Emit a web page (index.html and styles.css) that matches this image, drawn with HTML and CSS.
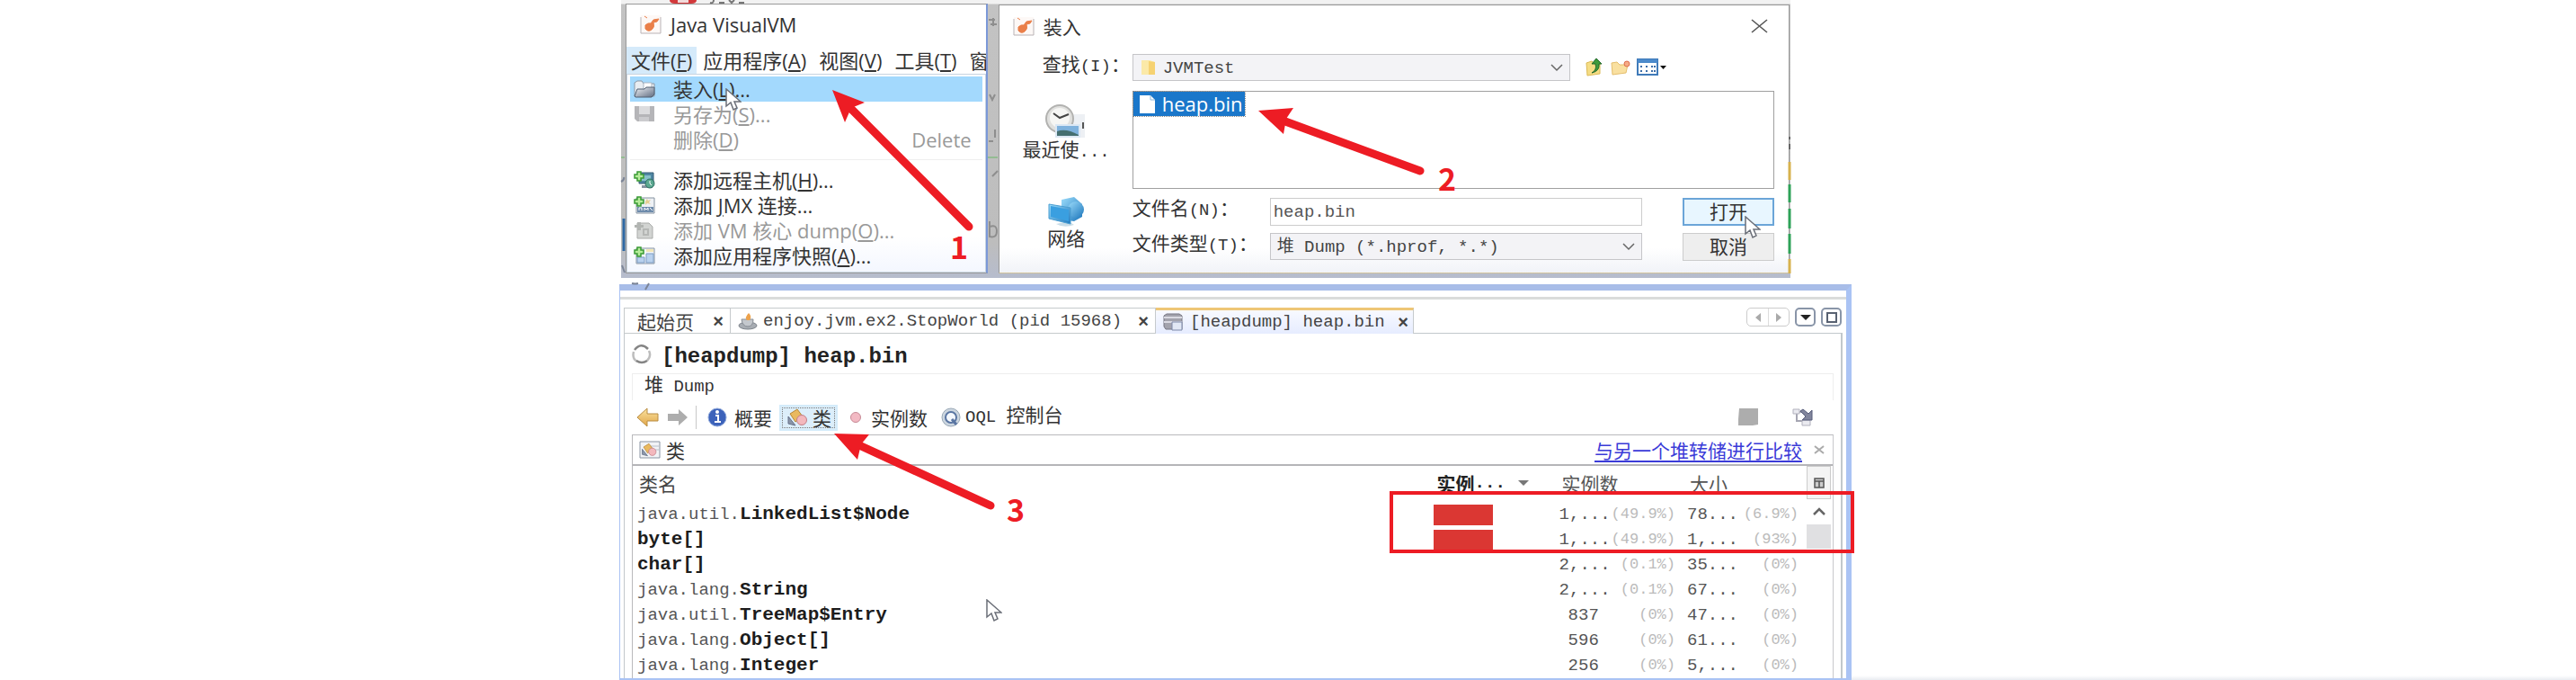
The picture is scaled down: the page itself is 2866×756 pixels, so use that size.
FILE: index.html
```html
<!DOCTYPE html>
<html lang="zh-CN">
<head>
<meta charset="utf-8">
<title>Java VisualVM</title>
<link rel="stylesheet" href="styles.css">
</head>
<body>
<svg class="defs" width="0" height="0" aria-hidden="true">
  <defs>
    <linearGradient id="gold" x1="0" y1="0" x2="0" y2="1"><stop offset="0" stop-color="#fbe3a0"/><stop offset="1" stop-color="#e0a548"/></linearGradient>
    <linearGradient id="steel" x1="0" y1="0" x2="1" y2="1"><stop offset="0" stop-color="#f2f4f8"/><stop offset="1" stop-color="#5f6b80"/></linearGradient>
    <linearGradient id="sea" x1="0" y1="0" x2="1" y2="1"><stop offset="0" stop-color="#9bdcfb"/><stop offset="1" stop-color="#1f78bd"/></linearGradient>
    <symbol id="vm" viewBox="0 0 24 22"><rect x="1" y="1" width="22" height="20" fill="#fdf8f6"/><path d="M1 3v18h22V3" fill="none" stroke="#b9b3b6"/><path d="M5 2l3 2M6 12q3-3 6-2l3-4 6-1-2 3-4 1q2 5-2 8t-7-1z" fill="#ea7f49" stroke="#ea7f49"/></symbol>
    <symbol id="plus" viewBox="0 0 12 12"><path d="M4 1h4v3h3v4H8v3H4V8H1V4h3z" fill="#b6ec9a" stroke="#3a9a35" stroke-width="1.5"/></symbol>
    <symbol id="cursor" viewBox="0 0 18 26"><path d="M1 1v19l5-4 3 8 4-2-3-7h7z" fill="#fff" stroke="#6b6f78" stroke-width="1.5"/></symbol>
    <symbol id="shapes" viewBox="0 0 24 20"><path d="M4 6l8-5 6 8-8 6z" fill="#e9b95f" stroke="#b98735"/><path d="M2 9v8l8 2z" fill="#8b96a8" stroke="#66718a"/><circle cx="17" cy="13" r="5.500" fill="#f3b8bd" stroke="#c27f88"/></symbol>
  </defs>
</svg>
<main class="page">
  <section class="shot shot-top">
    <div class="desktop">
      <div class="app">
        <header class="app-title"><svg class="i24"><use href="#vm"/></svg><h1>Java VisualVM</h1></header>
        <nav class="menubar">
          <button class="on">文件(<u>F</u>)</button><button>应用程序(<u>A</u>)</button><button>视图(<u>V</u>)</button><button>工具(<u>T</u>)</button><button>窗</button>
        </nav>
        <div class="menu">
          <button class="hot"><svg class="i24" viewBox="0 0 24 20"><path d="M1 18V3l3-2h5l2 3h12v14z" fill="#e8edf2" stroke="#8c98a6"/><path d="M11 3h9v8h-9z" fill="#fff" stroke="#a9b4c1"/><path d="M1 18l3-8h8l2-2h9v8l-3 3H2z" fill="url(#steel)" stroke="#526072"/></svg><span>装入(<u>L</u>)...</span></button>
          <button class="off"><svg class="i24" viewBox="0 0 24 20"><path d="M1 1h22v17H4l-3-3z" fill="#b5b5b8"/><path d="M6 1h12v9H6z" fill="#dcdcde"/><path d="M6 13h11v5H6z" fill="#cbcbce"/></svg><span>另存为(<u>S</u>)...</span></button>
          <button class="off"><i class="i24"></i><span>删除(<u>D</u>)</span><kbd>Delete</kbd></button>
          <hr>
          <button><svg class="i24" viewBox="0 0 24 20"><path d="M6 2h16v12H6z" fill="#4f86a3" stroke="#365c74"/><path d="M9 5h10v6H9z" fill="#86c0c9"/><path d="M9 16h12v3H9z" fill="#8592a0"/><circle cx="18" cy="14" r="5" fill="#5ba890" stroke="#2f6f62"/><path d="M18 11v3l2 2" stroke="#fff" fill="none"/><use href="#plus" width="12" height="12"/></svg><span>添加远程主机(<u>H</u>)...</span></button>
          <button><svg class="i24" viewBox="0 0 24 20"><path d="M3 2h20v17H3z" fill="#eef1f5" stroke="#8592a0"/><path d="M4 12h18v6H4z" fill="#6e8bab"/><path d="M6 16v-3h3v3M12 16v-3l2 2 2-2v3M18 13l3 3" stroke="#fff" fill="none"/><path d="M15 3l1 2 3-1-2 3 2 2-4-1-2 2v-4z" fill="#e6cf94"/><use href="#plus" width="12" height="12"/></svg><span>添加 <u>J</u>MX 连接...</span></button>
          <button class="off"><svg class="i24" viewBox="0 0 24 20"><path d="M4 2h13l4 4v13H4z" fill="#d2d4d2" stroke="#aaacaa"/><path d="M10 8v8h7V8zM12 10h3v4h-3z" fill="#b5b7b5"/><path d="M4 1h4v3h3v3H8v3H4V7H1V4h3z" fill="#b2b5b2"/></svg><span>添加 VM 核心 dump(<u>O</u>)...</span></button>
          <button><svg class="i24" viewBox="0 0 24 20"><path d="M3 2h20v17H3z" fill="#f3f6fa" stroke="#8592a0"/><path d="M4 12h8v6H4zM14 8h8v10h-8z" fill="#b9d1ee" stroke="#7c9cc4"/><path d="M14 3h8v3h-8z" fill="#f1e6b8"/><use href="#plus" width="12" height="12"/></svg><span>添加应用程序快照(<u>A</u>)...</span></button>
        </div>
      </div>
      <div class="dialog">
        <header class="dialog-title"><svg class="i24"><use href="#vm"/></svg><h2>装入</h2><button aria-label="关闭"><svg width="20" height="18" viewBox="0 0 20 18"><path d="M1 2l17 14M18 2L1 16" stroke="#555" stroke-width="1.600"/></svg></button></header>
        <div class="dialog-body">
          <label class="look-label" for="look"><span class="zh">查找</span>(I)<span class="zh">：</span></label>
          <div class="look-row">
            <div class="combo look"><svg width="20" height="20" viewBox="0 0 20 20"><path d="M2 2h9l6 2v14H2z" fill="#fbe9a8"/><path d="M10 3l7 1v14h-7z" fill="#f6d272"/></svg><select id="look"><option>JVMTest</option></select><svg class="chev" width="16" height="12" viewBox="0 0 16 12"><path d="M2 3l6 6 6-6" fill="none" stroke="#666" stroke-width="1.500"/></svg></div>
            <button aria-label="上一级"><svg width="22" height="22" viewBox="0 0 22 22"><path d="M2 6l6-2 2 2h7v12l-14 2z" fill="#f5dd85" stroke="#dcba55"/><path d="M8 17q6-3 4-10H8l5-6 6 6h-3q1 8-8 10z" fill="#3f9a3c" stroke="#23682a"/></svg></button>
            <button aria-label="新建文件夹"><svg width="24" height="20" viewBox="0 0 24 20"><path d="M2 5l6-1 3 3h9l-2 9-15 2z" fill="#f9e0a0" stroke="#e5be6d"/><circle cx="19" cy="6" r="3" fill="#f5ab85" stroke="#dd6d4d"/></svg></button>
            <button aria-label="查看"><svg width="34" height="20" viewBox="0 0 34 20"><path d="M1 1h22v17H1z" fill="#fff" stroke="#3f7ab9" stroke-width="2"/><path d="M1 1h22v4H1z" fill="#4c8acb"/><path d="M5 8v8M11 8v8M17 8v8M20 8v8" stroke="#3d6ea8" stroke-width="2" stroke-dasharray="2 3"/><path d="M26 8h7l-3.500 4z" fill="#111"/></svg></button>
          </div>
          <nav class="places">
            <button><svg width="46" height="40" viewBox="0 0 46 40"><path d="M28 12h16v26H28z" fill="#edf0f4"/><path d="M42 21v7" stroke="#555" stroke-width="2"/><circle cx="16" cy="17" r="15" fill="#e0e0de" stroke="#b2b2b0" stroke-width="2"/><circle cx="16" cy="16" r="11" fill="#f6f6f4"/><path d="M9 11l7 5 10-4" fill="none" stroke="#444" stroke-width="2"/><path d="M11 23h28v15H11z" fill="#dce8f4"/><path d="M13 25h24v11H13z" fill="#7fb2dd"/><path d="M13 31q10-4 24 4v1H13z" fill="#456f70"/></svg><span><span class="zh">最近使</span>...</span></button>
            <button><svg width="42" height="36" viewBox="0 0 42 36"><path d="M16 4l14-3 9 8v14l-9 5-14-2z" fill="url(#sea)"/><circle cx="32" cy="15" r="9" fill="url(#sea)"/><path d="M10 31q9 5 20 1l-6-4z" fill="#c9dde8"/><path d="M2 9l24 4v18L2 25z" fill="url(#sea)" stroke="#4a9ed2"/><path d="M4 11l20 4v13L4 23z" fill="#3a9fe0"/></svg><span class="zh">网络</span></button>
          </nav>
          <div class="files" role="listbox" aria-label="文件"><div class="file" role="option" aria-selected="true"><svg width="22" height="22" viewBox="0 0 22 22"><path d="M3 1h12l5 5v15H3z" fill="#fff"/><path d="M15 1v5h5" fill="none" stroke="#8bb6dc"/></svg>heap.bin</div></div>
          <form class="fields">
            <label for="fname"><span class="zh">文件名</span>(N)<span class="zh">：</span></label><input id="fname" value="heap.bin"><button type="button" class="btn primary">打开</button>
            <label for="ftype"><span class="zh">文件类型</span>(T)<span class="zh">：</span></label><div class="combo"><select id="ftype"><option>堆 Dump (*.hprof, *.*)</option></select><svg class="chev" width="16" height="12" viewBox="0 0 16 12"><path d="M2 3l6 6 6-6" fill="none" stroke="#666" stroke-width="1.500"/></svg></div><button type="button" class="btn">取消</button>
          </form>
        </div>
      </div>
    </div>
  </section>

  <section class="shot shot-bottom">
    <div class="workbench">
      <div class="strip"></div>
      <div class="tabs">
        <button class="tab"><span class="zh">起始页</span><b>×</b></button>
        <button class="tab t2"><svg class="i22" viewBox="0 0 22 20"><ellipse cx="11" cy="15" rx="10" ry="4" fill="#a8adb3" stroke="#7c828a"/><path d="M4 8h13q0 8-6 8T4 8z" fill="#c4c8cd" stroke="#878d95"/><path d="M10 9q-3-3 2-8 4 4 1 8z" fill="#eda24c"/></svg>enjoy.jvm.ex2.StopWorld (pid 15968)<b>×</b></button>
        <button class="tab t3 active"><svg class="i22" viewBox="0 0 22 20"><path d="M1 3l3-2h14l3 2v15H3l-2-3z" fill="#a3a3ad" stroke="#777783"/><path d="M1 5h20M1 10h20" stroke="#dadae2" stroke-width="2"/><path d="M10 10h11v9H10z" fill="#e2e8f5" stroke="#7d88a8"/></svg>[heapdump] heap.bin<b>×</b></button>
        <div class="tabtools">
          <span class="pair"><button aria-label="左"><svg width="8" height="12"><path d="M7 1v10L1 6z" fill="#aaa"/></svg></button><button aria-label="右"><svg width="8" height="12"><path d="M1 1v10l6-5z" fill="#aaa"/></svg></button></span>
          <button class="tool" aria-label="列表"><svg width="12" height="8"><path d="M0 1h12L6 7z" fill="#222"/></svg></button>
          <button class="tool" aria-label="最大化"><svg width="12" height="12"><path d="M1 1h10v10H1z" fill="none" stroke="#596272" stroke-width="2"/></svg></button>
        </div>
      </div>
      <div class="view">
        <h2 class="view-title"><svg width="22" height="24" viewBox="0 0 22 24"><path d="M3 7Q10-2 18 6" fill="none" stroke="#858585" stroke-width="2.500"/><path d="M19 8q3 6-2 11" fill="none" stroke="#bdbdbd" stroke-width="2.500"/><path d="M2 9q-2 8 4 11" fill="none" stroke="#bdbdbd" stroke-width="2.500"/><path d="M5 19q6 4 12 0" fill="none" stroke="#858585" stroke-width="2.500"/></svg>[heapdump] heap.bin</h2>
        <div class="subtitle"><span class="zh">堆</span> Dump</div>
        <div class="toolbar">
          <button aria-label="后退"><svg width="26" height="22" viewBox="0 0 26 22"><path d="M1 11L12 1v6h12v8H12v6z" fill="url(#gold)" stroke="#b98d42"/></svg></button>
          <button aria-label="前进"><svg width="24" height="20" viewBox="0 0 24 20"><path d="M23 10L13 1v5H1v8h12v5z" fill="#adadad"/></svg></button>
          <i class="sep"></i>
          <button class="summary"><svg width="22" height="22" viewBox="0 0 22 22"><circle cx="11" cy="11" r="10" fill="#3c62ba" stroke="#8fa8da"/><path d="M9 9h3v7M8 16h7" stroke="#fff" stroke-width="2" fill="none"/><circle cx="11" cy="5" r="2" fill="#fff"/></svg><span class="zh">概要</span></button>
          <button class="picked"><svg width="26" height="20"><use href="#shapes"/></svg><span class="zh">类</span></button>
          <button class="inst"><svg width="14" height="14"><circle cx="7" cy="7" r="5.500" fill="#f2b9c3" stroke="#c78a96"/></svg><span class="zh">实例数</span></button>
          <button class="oql"><svg width="24" height="22" viewBox="0 0 24 22"><circle cx="12" cy="11" r="10" fill="#ccd6e0" stroke="#99a8b6"/><circle cx="12" cy="11" r="6" fill="#f4f8fd" stroke="#5975a2" stroke-width="2"/><path d="M13 13l5 6" stroke="#5975a2" stroke-width="3"/></svg><span>OQL <span class="zh">控制台</span></span></button>
          <span class="grow"></span>
          <button aria-label="保存"><svg width="24" height="20" viewBox="0 0 24 20"><path d="M2 0h21v18l-6 1H1v-7z" fill="#adadad"/></svg></button>
          <button class="tree" aria-label="导出"><svg width="24" height="20" viewBox="0 0 24 20"><path d="M1 4h12M5 4v10h6" fill="none" stroke="#a5a5b2" stroke-width="2"/><path d="M1 1h7v5H1zM11 13h9v6h-9z" fill="#eaeaf0" stroke="#b1b1bd"/><path d="M9 3l3-2 6 5 4-4v11H11l4-4z" fill="#81859c" stroke="#565c7a"/></svg></button>
        </div>
        <div class="panel">
          <div class="panel-head"><svg width="24" height="20" viewBox="0 0 24 20"><path d="M1 1h22v18H1z" fill="#f1f3f6" stroke="#8a94a2"/><path d="M12 6h10M14 10h8" stroke="#b8bfc9"/><use href="#shapes" x="2" y="2" width="18" height="16"/></svg><h3 class="zh">类</h3><a class="zh" href="#compare">与另一个堆转储进行比较</a><button aria-label="关闭"><svg width="12" height="12"><path d="M1 2l10 8M11 2L1 10" stroke="#aaa" stroke-width="2"/></svg></button></div>
          <div class="grid">
            <table>
              <colgroup><col class="c-name"><col class="c-bar"><col class="c-n"><col class="c-p"><col class="c-n"><col class="c-q"></colgroup>
              <thead><tr><th class="zh">类名</th><th class="sorted"><span class="head"><span class="zh">实例</span>...<svg width="12" height="8"><path d="M0 1h12L6 7z" fill="#777"/></svg></span></th><th class="zh" colspan="2">实例数</th><th class="zh" colspan="2">大小</th></tr></thead>
              <tbody>
                <tr><td>java.util.<b>LinkedList$Node</b></td><td><div class="bar"></div></td><td>1,...</td><td class="pct">(49.9%)</td><td>78...</td><td class="pct">(6.9%)</td></tr>
                <tr><td><b>byte[]</b></td><td><div class="bar"></div></td><td>1,...</td><td class="pct">(49.9%)</td><td>1,...</td><td class="pct">(93%)</td></tr>
                <tr><td><b>char[]</b></td><td></td><td>2,...</td><td class="pct">(0.1%)</td><td>35...</td><td class="pct">(0%)</td></tr>
                <tr><td>java.lang.<b>String</b></td><td></td><td>2,...</td><td class="pct">(0.1%)</td><td>67...</td><td class="pct">(0%)</td></tr>
                <tr><td>java.util.<b>TreeMap$Entry</b></td><td></td><td class="num">837</td><td class="pct">(0%)</td><td>47...</td><td class="pct">(0%)</td></tr>
                <tr><td>java.lang.<b>Object[]</b></td><td></td><td class="num">596</td><td class="pct">(0%)</td><td>61...</td><td class="pct">(0%)</td></tr>
                <tr><td>java.lang.<b>Integer</b></td><td></td><td class="num">256</td><td class="pct">(0%)</td><td>5,...</td><td class="pct">(0%)</td></tr>
              </tbody>
            </table>
            <div class="scroll"><button class="corner" aria-label="列"><svg width="12" height="12"><path d="M1 1h10v10H1zM1 4h10M6 4v7" fill="#ccc" stroke="#555" stroke-width="1.500"/></svg></button><button class="up" aria-label="上"><svg width="16" height="12"><path d="M2 9l6-6 6 6" fill="none" stroke="#666" stroke-width="2.500"/></svg></button><i class="thumb"></i></div>
          </div>
        </div>
      </div>
    </div>
    <div class="rest"></div>
  </section>

  <svg class="notes" viewBox="0 0 2866 756" role="img" aria-label="步骤标注">
    <path d="M745 0h30q0 4-6 4h-18q-6 0-6-4z" fill="#d2393b"/><path d="M754 0h12v3h-12z" fill="#f1dada"/>
    <path d="M790 3q4 1 4-3M800 3h6M811 0l3 3 3-3M822 3h6" fill="none" stroke="#777" stroke-width="2"/>
    <path d="M691 175h4M1099 175h11" stroke="#69b866"/>
    <path d="M1100 22h7M1102 27h7M1105 20v9M1101 105l3 6 3-6M1100 157h5M1107 144v9M1104 196l6-6M1101 246v17q8 2 8-6t-8-5" fill="none" stroke="#8e8e8e" stroke-width="2"/>
    <path d="M691 202q4-2 3-5M692 295l3 8M703 315q4 1 7 0M722 315l-4 7" fill="none" stroke="#7c8597" stroke-width="2"/>
    <path d="M694 243v36" stroke="#2e68a4" stroke-width="3"/><path d="M1991 152v3M1991 160v6" stroke="#666" stroke-width="2"/>
    <path d="M1991 180v20M1991 288v16" stroke="#d7b24e" stroke-width="3"/><path d="M1991 205v20M1991 232v22M1991 260v22" stroke="#2ea258" stroke-width="3"/>
    <use href="#cursor" x="807" y="98" width="18" height="26"/>
    <use href="#cursor" x="1941" y="240" width="18" height="26"/>
    <use href="#cursor" x="1097" y="666" width="18" height="26"/>
    <g stroke="#ed1c24" stroke-width="9" stroke-linecap="round"><path d="M946 120L1078 252M1430 135L1580 190M956 495L1102 562"/></g>
    <g fill="#ed1c24"><path d="M926 100l36 14-15 6-7 16zM1400 123l39-3-8 12-3 17zM928 482l39 1-9 11-4 17z"/></g>
    <path d="M1548 548h513v65h-513z" fill="none" stroke="#ed1c24" stroke-width="4"/>
    <g class="step"><text x="1057" y="288">1</text><text x="1600" y="212">2</text><text x="1120" y="580">3</text></g>
  </svg>
</main>
</body>
</html>
```
FILE: styles.css
```css
* { box-sizing: border-box; }
body { margin: 0; background: #fff; color: #333; font: 19px/28px "Liberation Mono", "Noto Sans CJK SC", monospace; }
h1, h2, h3 { margin: 0; font-weight: 400; }
button { margin: 0; padding: 0; border: 0; background: none; color: inherit; font: inherit; display: flex; align-items: center; white-space: nowrap; }
svg { flex: none; display: block; }
.defs { position: absolute; }
.zh { font-family: "Noto Sans CJK SC", sans-serif; font-size: 21px; line-height: 20px; }
.i24 { width: 24px; height: 22px; flex: none; }
.i22 { width: 22px; height: 20px; }
.page { position: relative; }
.notes { position: absolute; top: 0; left: 0; width: 100%; pointer-events: none; }
.step { fill: #ed1c24; font: bold 34px "Noto Sans CJK SC", sans-serif; }

.shot { display: grid; }
.shot-top { grid-template-columns: 691fr minmax(0, 1301fr) 874fr; }
.shot-top .desktop { grid-column: 2; }
.desktop { display: grid; grid-template-columns: minmax(0, 403fr) minmax(0, 881fr); gap: 12px; padding: 4px 1px 5px 5px; background: linear-gradient(#f2f2f2 4px, #c3c3c3 5px, #bdbdbd 270px, #b6bccd); }

.app { display: flex; flex-direction: column; overflow: hidden; border: 1px solid #999; border-right: 2px solid #7b98d8; background: #fff; font: 22px/28px "Open Sans", "Noto Sans CJK SC", sans-serif; }
.app-title { display: flex; align-items: center; gap: 10px; height: 47px; padding: 0 0 3px 15px; }
.app-title h1 { font-size: 22px; }
.menubar { display: flex; height: 30px; overflow: hidden; }
.menubar button { padding: 0 7px; font-size: 22px; }
.menubar .on { padding: 0 5px; background: #d5eafa; }
.menu { flex: 1; padding: 2px 3px 4px; border: 1px solid #c8d4e0; background: linear-gradient(#fff 180px, #f4f7ff); }
.menu button { width: 100%; height: 28px; padding: 0 12px 0 4px; gap: 20px; }
.menu .hot { background: #a3d9fd; }
.menu .off { color: #999; }
.menu kbd { margin-left: auto; font: inherit; }
.menu hr { margin: 8px 0; border: 0; border-top: 1px solid #eee; }

.dialog { border: 1px solid #999; border-bottom-color: #d3c49c; background: linear-gradient(#fff 270px, #f1f3f8); margin-top: 1px; }
.dialog-title { display: flex; align-items: center; gap: 10px; height: 49px; padding: 0 22px 4px 15px; }
.dialog-title h2 { font: 21px/28px "Noto Sans CJK SC", sans-serif; }
.dialog-title button { margin-left: auto; }
.dialog-body { display: grid; grid-template-columns: 131px minmax(0, 1fr); grid-template-rows: 30px auto auto; column-gap: 17px; padding: 5px 16px 11px 0; }
.look-label { padding-left: 48px; white-space: nowrap; }
.look-row { display: flex; align-items: center; gap: 6px; }
.combo { display: flex; align-items: center; height: 30px; padding: 0 6px 0 7px; border: 1px solid #c5c5c8; background: #f3f3f6; }
.look { flex: 0 1 487px; margin-right: 10px; }
.combo select { flex: 1; min-width: 0; height: 26px; padding: 0 0 0 6px; appearance: none; border: 0; background: none; color: #444; font: inherit; }
.combo .chev { margin-bottom: 1px; }
.fields select { padding: 0; }
.places { grid-row: 2 / 4; display: flex; flex-direction: column; padding: 25px 0 0 18px; gap: 38px; }
.places button { flex-direction: column; line-height: 22px; }
.files { height: 109px; margin-top: 11px; border: 1px solid #a0a0a0; background: #fff; }
.file { display: flex; width: fit-content; align-items: center; gap: 6px; height: 27px; padding: 0 2px 0 4px; outline: 1px dotted #888; background: #1a77ca; color: #fff; font: 22px/27px "Open Sans", sans-serif; }
.fields { grid-column: 2; display: grid; grid-template-columns: 153px minmax(0, 413fr) 102px; grid-auto-rows: 31px; column-gap: 45px; row-gap: 8px; margin-top: 10px; }
.fields label { white-space: nowrap; margin-right: -45px; }
.fields input, .fields .combo { margin-left: -45px; }
.fields input { min-width: 0; height: 31px; padding: 0 3px; border: 1px solid #ccc; background: #fff; color: #555; font: inherit; }
.btn { justify-content: center; height: 31px; padding-bottom: 3px; border: 1px solid #ccc; background: #eee; font: 21px/24px "Noto Sans CJK SC", sans-serif; }
.primary { border: 2px solid #6ba5d8; background: #e8f6ff; }

.shot-bottom { grid-template-columns: 689fr minmax(0, 1371fr) 806fr; margin-top: 7px; }
.workbench { grid-column: 2; border: solid #aac3f4; border-width: 7px 6px 2px 1px; border-top-color: #a8bde8; padding: 0 4px 0 4px; background: #fff; }
.rest { align-self: end; height: 5px; background: linear-gradient(#fff, #e9ecf1); }
.strip { height: 10px; margin: 0 -4px 9px; border-bottom: 3px solid #dadcdb; }
.tabs { display: flex; height: 29px; border-bottom: 1px solid #c2c8cc; }
.tab { height: 29px; padding: 0 7px 0 14px; border: 1px solid #c6cacc; border-left-width: 0; color: #444; }
.tab:first-child { border-left-width: 1px; }
.tab b { margin-left: auto; font: bold 20px/20px "Liberation Sans", sans-serif; color: #444; }
.tab:first-child { width: 119px; }
.t2 { width: 473px; padding-left: 8px; gap: 6px; }
.t3 { width: 287px; padding: 0 5px 0 8px; gap: 8px; }
.active { border-top: 3px solid #eec676; border-bottom: 0; background: linear-gradient(#f8f9ff, #e6ecff); }
.tabtools { display: flex; gap: 6px; margin: 0 1px 0 auto; height: 21px; }
.pair { display: flex; border: 1px solid #ccc; border-radius: 5px; }
.pair button { width: 23px; justify-content: center; }
.pair button + button { border-left: 1px solid #ddd; }
.tool { width: 23px; justify-content: center; border: 2px solid #8995a8; border-radius: 5px; }
.view { border: solid #c2c8cc; border-width: 0 2px 0 1px; padding: 0 8px; }
.view-title { display: flex; align-items: center; gap: 11px; height: 44px; padding-top: 8px; color: #222; font: bold 24px/28px "Liberation Mono", monospace; }
.view-title svg { margin-bottom: 6px; }
.subtitle { height: 30px; padding-left: 13px; border: 1px solid #eee; border-bottom: 0; }
.toolbar { display: flex; align-items: center; height: 38px; padding: 0 22px 0 5px; gap: 8px; }
.toolbar button { gap: 8px; }
.sep { width: 1px; height: 26px; background: #c8c8c8; }
.toolbar .summary { margin-left: 4px; }
.toolbar .picked { height: 29px; padding: 0 5px; gap: 4px; border: 2px solid #d4ebfa; outline: 1px dotted #777; outline-offset: -4px; background: #dceefa; }
.toolbar .inst { margin-left: 5px; gap: 10px; }
.toolbar .oql { margin-left: 6px; gap: 4px; }
.grow { flex: 1; }
.toolbar .tree { margin-left: 29px; }
.panel { border: 1px solid #b9b9bc; border-bottom: 0; border-right-color: #c9c9cc; }
.panel-head { display: flex; align-items: center; height: 34px; padding: 0 9px 0 7px; border-bottom: 2px solid #b5b5b8; }
.panel-head h3 { margin-left: 6px; }
.panel-head a { margin-left: auto; color: #3b3bd8; text-underline-offset: 3px; }
.panel-head button { margin-left: 13px; }
.grid { display: flex; }
table { flex: 1; min-width: 0; table-layout: fixed; border-collapse: collapse; color: #555; }
.c-bar { width: 136px; } .c-n { width: 62px; } .c-p { width: 76px; } .c-q { width: 75px; }
th { height: 40px; padding: 0 0 2px 7px; font-weight: 400; text-align: left; white-space: nowrap; }
th:first-child { color: #444; }
.sorted { padding-left: 4px; color: #222; }
.head { display: flex; align-items: center; font-weight: 700; }
.head svg { margin-left: 14px; }
td { height: 28px; padding: 0; white-space: nowrap; }
td:first-child { padding-left: 5px; }
td:nth-child(3), td:nth-child(5) { padding-left: 4px; }
td.num { padding-left: 14px; }
td b { color: #1c1c1c; font-size: 21px; line-height: 24px; }
.pct { padding-right: 9px; text-align: right; color: #bbb; font-size: 17px; }
.bar { width: 66px; height: 23px; background: #db3733; }
.scroll { width: 29px; }
.corner { width: 27px; height: 37px; justify-content: center; border: 1px solid #ccc; background: #f4f4f4; }
.up { width: 27px; height: 28px; justify-content: center; }
.thumb { display: block; width: 27px; height: 27px; background: #e0e0e2; }
```
